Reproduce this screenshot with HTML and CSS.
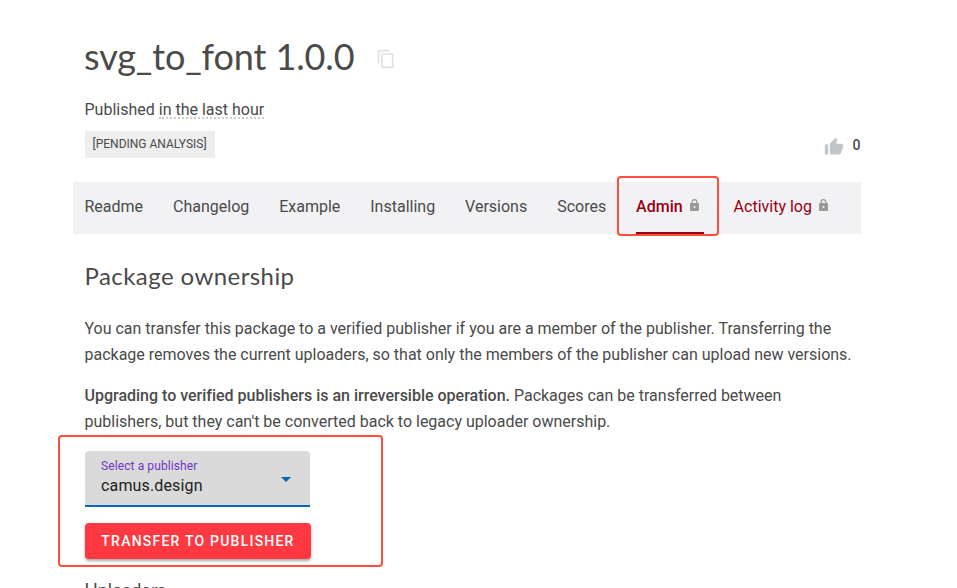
FILE: index.html
```html
<!DOCTYPE html>
<html lang="en">
<head>
<meta charset="utf-8">
<title>svg_to_font 1.0.0</title>
<link rel="stylesheet" href="styles.css">
</head>
<body>
<main class="page">
  <header class="header">
    <h1 class="title"><span class="title-text">svg_to_font 1.0.0</span>
      <svg class="copy" viewBox="0 0 24 24"><path d="M16 1H4C2.900 1 2 1.900 2 3v14h2V3h12V1zm3 4H8C6.900 5 6 5.900 6 7v14c0 1.100.9 2 2 2h11c1.100 0 2-.9 2-2V7c0-1.100-.9-2-2-2zm0 16H8V7h11v14z"/></svg>
    </h1>
    <div class="published"><span class="pub-label">Published</span> <span class="ago">in the last hour</span></div>
    <div class="meta">
      <span class="tag"><span class="tag-text">[PENDING ANALYSIS]</span></span>
      <div class="likes">
        <svg class="thumb" viewBox="0 0 24 24"><path d="M1 21h4V9H1v12zm22-11c0-1.100-.9-2-2-2h-6.310l.95-4.570.03-.32c0-.41-.17-.79-.44-1.060L14.170 1 7.590 7.590C7.220 7.950 7 8.450 7 9v10c0 1.100.9 2 2 2h9c.83 0 1.540-.5 1.840-1.220l3.020-7.050c.09-.23.14-.47.14-.73v-2z"/></svg>
        <span>0</span>
      </div>
    </div>
  </header>
  <nav class="tabs">
    <a class="tab">Readme</a>
    <a class="tab">Changelog</a>
    <a class="tab">Example</a>
    <a class="tab">Installing</a>
    <a class="tab">Versions</a>
    <a class="tab">Scores</a>
    <a class="tab private active"><span class="tab-text">Admin</span><svg class="lock" viewBox="0 0 9 12" preserveAspectRatio="none"><path fill-rule="evenodd" d="M1.500 4V3a3 3 0 0 1 6 0v1H8a1 1 0 0 1 1 1v6a1 1 0 0 1-1 1H1a1 1 0 0 1-1-1V5a1 1 0 0 1 1-1zm1.200 0h3.600V3a1.800 1.800 0 0 0-3.600 0zM4.500 7a1 1 0 1 0 0 2 1 1 0 0 0 0-2z"/></svg><span class="mark mark-tab"></span></a>
    <a class="tab private"><span class="tab-text">Activity log</span><svg class="lock" viewBox="0 0 9 12" preserveAspectRatio="none"><path fill-rule="evenodd" d="M1.500 4V3a3 3 0 0 1 6 0v1H8a1 1 0 0 1 1 1v6a1 1 0 0 1-1 1H1a1 1 0 0 1-1-1V5a1 1 0 0 1 1-1zm1.200 0h3.600V3a1.800 1.800 0 0 0-3.600 0zM4.500 7a1 1 0 1 0 0 2 1 1 0 0 0 0-2z"/></svg></a>
  </nav>
  <section class="content">
    <h2 class="heading"><span class="heading-text">Package ownership</span></h2>
    <p>You can transfer this package to a verified publisher if you are a member of the publisher. Transferring the<br>package removes the current uploaders, so that only the members of the publisher can upload new versions.</p>
    <p><strong>Upgrading to verified publishers is an irreversible operation.</strong> Packages can be transferred between<br>publishers, but they can't be converted back to legacy uploader ownership.</p>
    <div class="transfer">
      <div class="select">
        <div class="field">
          <span class="select-label">Select a publisher</span>
          <span class="select-value">camus.design</span>
        </div>
        <svg class="arrow" viewBox="0 0 10 5"><path d="M0 0h10L5 5z"/></svg>
      </div>
      <button class="button" type="button">TRANSFER TO PUBLISHER</button>
      <span class="mark mark-form"></span>
    </div>
    <h3 class="subheading">Uploaders</h3>
  </section>
</main>
</body>
</html>
```

FILE: styles.css
```css
* { box-sizing: border-box; }

html { height: 588px; overflow: hidden; }

body {
  height: 588px;
  margin: 0;
  overflow: hidden;
  background: #fff;
  color: #4a4a4a;
  font: 16px/26px Roboto, sans-serif;
}

.page {
  width: 788px;
  margin-left: 73px;
  padding-top: 32px;
}

.header { padding-left: 12px; }

.title {
  display: flex;
  align-items: center;
  height: 48px;
  margin: 0;
  font: 400 36px/48px Lato, sans-serif;
}

.title-text { width: 292px; margin-left: -1px; letter-spacing: -0.12px; white-space: nowrap; }

.copy { width: 20px; height: 20px; margin-top: 5px; fill: #e0e0e0; }

.published { height: 26px; margin-top: 17px; text-indent: -0.5px; }

.ago {
  display: inline-block;
  height: 18px;
  line-height: 18px;
  border-bottom: 2px dotted #ccc;
  text-indent: 0;
}

.meta {
  display: flex;
  align-items: center;
  justify-content: space-between;
  height: 27px;
  margin-top: 8px;
}

.tag {
  width: 130px;
  height: 27px;
  padding-left: 7.5px;
  background: #eee;
  font-size: 12px;
  line-height: 26px;
}

.likes {
  display: flex;
  align-items: center;
  gap: 9px;
  padding: 1px 0.5px 0 0;
  font-size: 14px;
  font-weight: 500;
}

.thumb { width: 20px; height: 20px; margin-top: 3px; fill: #c0c5ca; }

.tabs {
  display: flex;
  gap: 29.95px;
  height: 52px;
  margin-top: 24px;
  padding-left: 11.5px;
  background: #f2f2f5;
  line-height: 50px;
}

.tab { position: relative; display: flex; white-space: nowrap; }

.private { color: #990012; }

.active { padding-right: 5px; font-weight: 500; border-bottom: 2px solid #990012; }

.lock { width: 9px; height: 12px; margin: 17px 0 0 7px; fill: #999; }

.mark {
  position: absolute;
  border: 2px solid #fc4e3a;
  border-radius: 4px;
  pointer-events: none;
}

.mark-tab { top: -6px; left: -19px; width: 102px; height: 60px; }

.content { padding-left: 12px; }

.heading {
  height: 34px;
  margin: 25px 0 23px -0.5px;
  font: 400 24px/34px Lato, sans-serif;
  letter-spacing: 0.43px;
}

p { margin: 0 0 15px -0.5px; white-space: nowrap; letter-spacing: -0.005px; }

strong { font-weight: 500; }

.transfer { position: relative; margin-top: 16px; }

.select {
  display: flex;
  align-items: center;
  justify-content: space-between;
  width: 225px;
  height: 56px;
  padding: 0 19px 1px 16px;
  background: #dadada;
  border-bottom: 2px solid #0066b8;
  border-radius: 4px 4px 0 0;
}

.field { display: flex; flex-direction: column; }

.select-label { color: #7234c8; font-size: 12px; line-height: 16px; letter-spacing: 0.1px; }

.select-value { color: #212121; line-height: 23px; letter-spacing: 0.15px; }

.arrow { width: 10px; height: 5px; margin-top: 3px; fill: #0066b8; }

.button {
  display: block;
  width: 226px;
  height: 36px;
  margin-top: 16px;
  padding: 0;
  border: 0;
  border-radius: 4px;
  background: #ff3842;
  box-shadow: 0 2px 3px rgba(0, 0, 0, 0.35);
  color: #fff;
  font: 500 14px/36px Roboto, sans-serif;
  letter-spacing: 1.22px;
}

.mark-form { top: -16px; left: -27px; width: 325px; height: 132px; }

.subheading {
  margin: 17px 0 0 -0.5px;
  font: 400 18px/26px Lato, sans-serif;
  letter-spacing: 0.05px;
}
```
